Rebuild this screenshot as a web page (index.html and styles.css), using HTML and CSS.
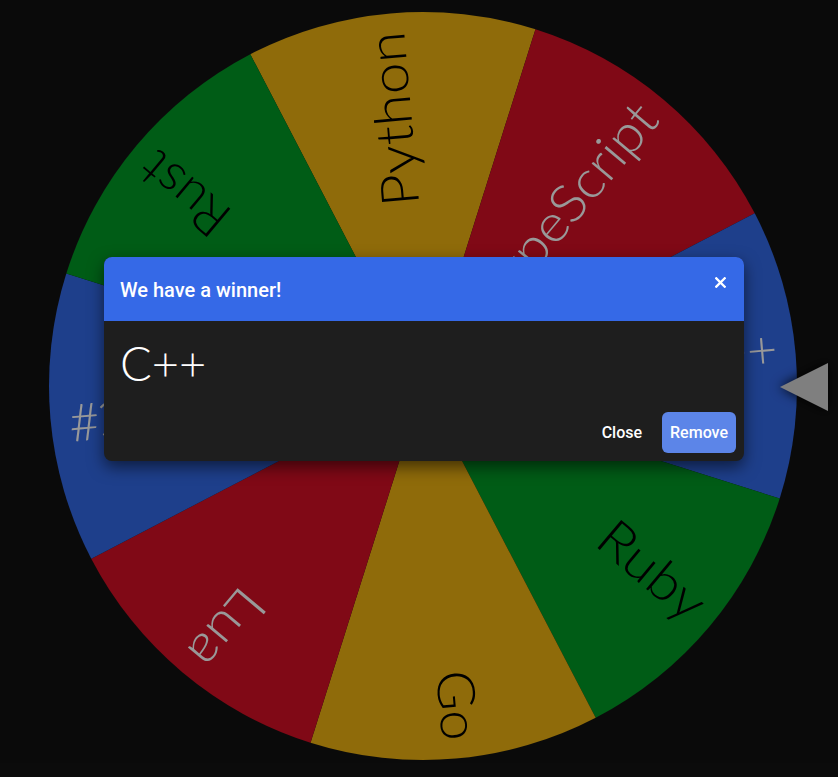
FILE: index.html
```html
<!DOCTYPE html>
<html lang="en">
<head>
<meta charset="utf-8">
<title>Wheel</title>
<link rel="stylesheet" href="styles.css">
</head>
<body>
<main class="stage">
  <svg class="wheel" width="838" height="777" viewBox="0 0 838 777" xmlns="http://www.w3.org/2000/svg">
    <g class="slices">
      <path class="s-yellow" d="M423,386 L250.31,54.26 A374,374 0 0,1 535.47,29.31 Z"/>
      <path class="s-red" d="M423,386 L535.47,29.31 A374,374 0 0,1 754.74,213.31 Z"/>
      <path class="s-blue" d="M423,386 L754.74,213.31 A374,374 0 0,1 779.69,498.47 Z"/>
      <path class="s-green" d="M423,386 L779.69,498.47 A374,374 0 0,1 595.69,717.74 Z"/>
      <path class="s-yellow" d="M423,386 L595.69,717.74 A374,374 0 0,1 310.53,742.69 Z"/>
      <path class="s-red" d="M423,386 L310.53,742.69 A374,374 0 0,1 91.26,558.69 Z"/>
      <path class="s-blue" d="M423,386 L91.26,558.69 A374,374 0 0,1 66.31,273.53 Z"/>
      <path class="s-green" d="M423,386 L66.31,273.53 A374,374 0 0,1 250.31,54.26 Z"/>
    </g>
    <g class="labels">
      <text class="dark" transform="rotate(-95 423 386)" x="779" y="386" dy="12" textLength="175" lengthAdjust="spacingAndGlyphs">Python</text>
      <text class="light" transform="rotate(-50 423 386)" x="779" y="386" dy="12" textLength="252" lengthAdjust="spacingAndGlyphs">TypeScript</text>
      <text class="light" transform="rotate(-5 423 386)" x="779" y="386" dy="12" textLength="96" lengthAdjust="spacingAndGlyphs">C++</text>
      <text class="dark" transform="rotate(40 423 386)" x="779" y="386" dy="12" textLength="124" lengthAdjust="spacingAndGlyphs">Ruby</text>
      <text class="dark" transform="rotate(85 423 386)" x="779" y="386" dy="12" textLength="70" lengthAdjust="spacingAndGlyphs">Go</text>
      <text class="light" transform="rotate(130 423 386)" x="779" y="386" dy="12" textLength="88" lengthAdjust="spacingAndGlyphs">Lua</text>
      <text class="light" transform="rotate(175 423 386)" x="779" y="386" dy="12" textLength="66" lengthAdjust="spacingAndGlyphs">C#</text>
      <text class="dark" transform="rotate(220 423 386)" x="779" y="386" dy="12" textLength="100" lengthAdjust="spacingAndGlyphs">Rust</text>
    </g>
    <polygon class="pointer" points="780,387 828,363 828,411"/>
  </svg>

  <div class="backdrop">
    <section class="dialog" role="dialog" aria-labelledby="dlg-title">
      <header class="dialog-head">
        <h2 id="dlg-title" class="dialog-title">We have a winner!</h2>
        <button class="icon-btn" aria-label="Close">
          <svg width="11" height="11" viewBox="0 0 11 11"><path d="M1.3 1.3 L9.7 9.7 M9.7 1.3 L1.3 9.7" stroke="#fff" stroke-width="2.3" stroke-linecap="square"/></svg>
        </button>
      </header>
      <div class="dialog-body">
        <p class="winner">C++</p>
      </div>
      <footer class="dialog-actions">
        <button class="btn btn-text">Close</button>
        <button class="btn btn-primary">Remove</button>
      </footer>
    </section>
  </div>
</main>
</body>
</html>
```

FILE: styles.css
```css
* { box-sizing: border-box; }

html, body {
  margin: 0;
  padding: 0;
  background: #121212;
  overflow: hidden;
}

.stage {
  position: relative;
  width: 838px;
  height: 777px;
}

.wheel {
  display: block;
}

.s-yellow { fill: #eeb211; }
.s-red { fill: #d50f25; }
.s-blue { fill: #3369e8; }
.s-green { fill: #009925; }

.labels text {
  font-family: "Lato", "Noto Sans", sans-serif;
  font-weight: 300;
  font-size: 52px;
  text-anchor: end;
}
.labels .dark { fill: #000; }
.labels .light { fill: #fff; }

.pointer {
  fill: #d4d4d4;
  filter: drop-shadow(0 0 6px rgba(0,0,0,0.9));
}

.backdrop {
  position: absolute;
  inset: 0;
  background: rgba(0, 0, 0, 0.4);
  padding: 257px 0 0 104px;
}

.dialog {
  width: 640px;
  background: #1e1e1e;
  border-radius: 8px;
  overflow: hidden;
  box-shadow: 0 6px 16px rgba(0, 0, 0, 0.55);
  font-family: "Roboto", "Liberation Sans", sans-serif;
  color: #fff;
}

.dialog-head {
  height: 64px;
  background: #3569e7;
  display: flex;
  align-items: center;
  justify-content: space-between;
  padding: 0 16px;
}

.dialog-title {
  margin: 0;
  font-size: 20px;
  font-weight: 500;
  line-height: 1;
  padding-top: 1px;
}

.icon-btn {
  background: none;
  border: 0;
  padding: 0;
  width: 11px;
  height: 11px;
  display: flex;
  align-items: center;
  justify-content: center;
  margin-right: 2px;
  margin-top: -14px;
  cursor: pointer;
}

.dialog-body {
  padding: 18px 16px 0;
  height: 91px;
}

.winner {
  margin: 0;
  font-family: "Lato", "Noto Sans", sans-serif;
  font-weight: 300;
  font-size: 47px;
  line-height: 48px;
}

.dialog-actions {
  display: flex;
  justify-content: flex-end;
  align-items: center;
  gap: 12px;
  padding: 0 8px 8px;
}

.btn {
  font-family: "Roboto", "Liberation Sans", sans-serif;
  font-size: 16px;
  font-weight: 500;
  color: #fff;
  border: 0;
  border-radius: 6px;
  height: 41px;
  padding: 0 8px;
  cursor: pointer;
}

.btn-text {
  background: transparent;
}

.btn-primary {
  background: #5c85e8;
}
```
